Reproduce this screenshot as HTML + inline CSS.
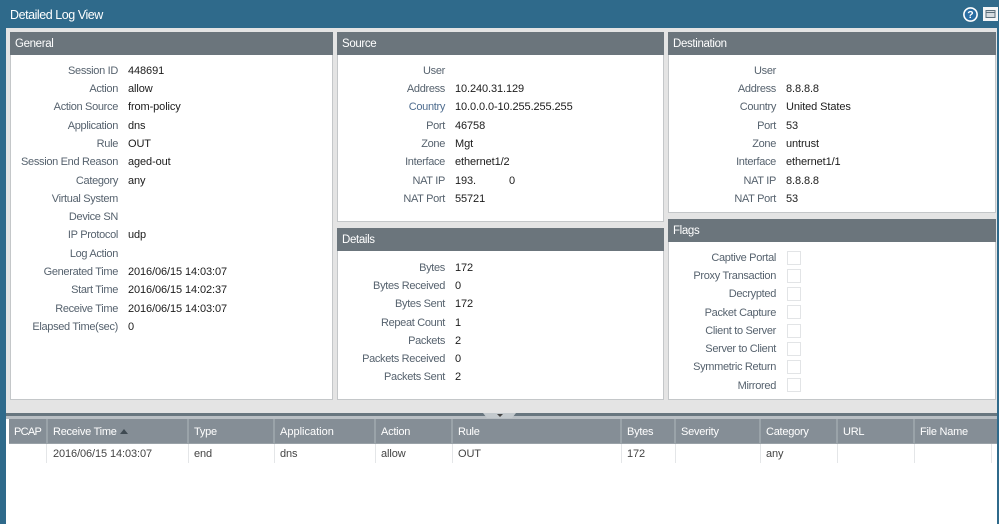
<!DOCTYPE html>
<html><head><meta charset="utf-8">
<style>
html,body{margin:0;padding:0}
body{width:999px;height:524px;position:relative;overflow:hidden;background:#2f6a8b;font-family:"Liberation Sans",sans-serif;font-size:11px;color:#1a1a1a}
div{position:absolute;box-sizing:border-box}
.p{background:#fff;border:1px solid #c4c7c9;border-top:0}
.h{background:#6b757c;color:#fff;height:23px;line-height:25px;padding-left:5px;font-size:11.5px;letter-spacing:-.35px;left:-1px;right:-1px;top:0}
.l,.v{height:14px;line-height:14px;white-space:nowrap;margin-top:1px}
.l{text-align:right;color:#56626e;width:130px;letter-spacing:-.32px}
.v{color:#1c1c1c;letter-spacing:-.1px}
.b{color:#4f6d8f}
.c{left:787px;width:14px;height:14px;border:1px solid #e2e4e6;background:#fff}
.th{top:419px;height:25px;line-height:27px;background:#858e96;color:#fff;border-right:2px solid #9aa3a9;padding-left:5px;white-space:nowrap;border-bottom:1px solid #9aa2a8;letter-spacing:-.25px}
.td{top:444px;height:19px;line-height:20px;background:#fff;color:#444;border-right:1px solid #e4e6e8;padding-left:5px;white-space:nowrap;letter-spacing:-.1px}
</style></head><body>
<div style="left:10px;top:7px;color:#fff;font-size:12.5px;line-height:16px;letter-spacing:-.45px">Detailed Log View</div>
<svg style="position:absolute;left:963px;top:7px" width="15" height="15" viewBox="0 0 15 15"><circle cx="7.5" cy="7.5" r="6.6" fill="#2b6ea3" stroke="#fff" stroke-width="1.6"/><text x="7.5" y="11.2" text-anchor="middle" font-family="Liberation Sans" font-weight="bold" font-size="10.5" fill="#fff">?</text></svg>
<svg style="position:absolute;left:983px;top:7px" width="15" height="14" viewBox="0 0 15 14"><rect width="15" height="14" fill="#f4f6f7"/><rect x="3" y="3.5" width="9" height="7" fill="#d5dbdf" stroke="#5c707c"/><line x1="3" y1="5.5" x2="12" y2="5.5" stroke="#5c707c"/></svg>

<div style="left:6px;top:28px;width:991px;height:496px;background:#e4e4e4"></div>

<div class="p" style="left:10px;top:32px;width:323px;height:368px"><div class="h">General</div></div>
<div class="p" style="left:337px;top:32px;width:327px;height:190px"><div class="h">Source</div></div>
<div class="p" style="left:337px;top:228px;width:327px;height:172px"><div class="h">Details</div></div>
<div class="p" style="left:668px;top:32px;width:328px;height:181px"><div class="h">Destination</div></div>
<div class="p" style="left:668px;top:219px;width:328px;height:181px"><div class="h">Flags</div></div>

<!-- General -->
<div class="l" style="left:-12px;top:63px">Session ID</div><div class="v" style="left:128px;top:63px">448691</div>
<div class="l" style="left:-12px;top:81px">Action</div><div class="v" style="left:128px;top:81px">allow</div>
<div class="l" style="left:-12px;top:99px">Action Source</div><div class="v" style="left:128px;top:99px">from-policy</div>
<div class="l" style="left:-12px;top:118px">Application</div><div class="v" style="left:128px;top:118px">dns</div>
<div class="l" style="left:-12px;top:136px">Rule</div><div class="v" style="left:128px;top:136px">OUT</div>
<div class="l" style="left:-12px;top:154px">Session End Reason</div><div class="v" style="left:128px;top:154px">aged-out</div>
<div class="l" style="left:-12px;top:173px">Category</div><div class="v" style="left:128px;top:173px">any</div>
<div class="l" style="left:-12px;top:191px">Virtual System</div>
<div class="l" style="left:-12px;top:209px">Device SN</div>
<div class="l" style="left:-12px;top:227px">IP Protocol</div><div class="v" style="left:128px;top:227px">udp</div>
<div class="l" style="left:-12px;top:246px">Log Action</div>
<div class="l" style="left:-12px;top:264px">Generated Time</div><div class="v" style="left:128px;top:264px">2016/06/15 14:03:07</div>
<div class="l" style="left:-12px;top:282px">Start Time</div><div class="v" style="left:128px;top:282px">2016/06/15 14:02:37</div>
<div class="l" style="left:-12px;top:301px">Receive Time</div><div class="v" style="left:128px;top:301px">2016/06/15 14:03:07</div>
<div class="l" style="left:-12px;top:319px">Elapsed Time(sec)</div><div class="v" style="left:128px;top:319px">0</div>

<!-- Source -->
<div class="l" style="left:315px;top:63px">User</div>
<div class="l" style="left:315px;top:81px">Address</div><div class="v" style="left:455px;top:81px">10.240.31.129</div>
<div class="l b" style="left:315px;top:99px">Country</div><div class="v" style="left:455px;top:99px">10.0.0.0-10.255.255.255</div>
<div class="l" style="left:315px;top:118px">Port</div><div class="v" style="left:455px;top:118px">46758</div>
<div class="l" style="left:315px;top:136px">Zone</div><div class="v" style="left:455px;top:136px">Mgt</div>
<div class="l" style="left:315px;top:154px">Interface</div><div class="v" style="left:455px;top:154px">ethernet1/2</div>
<div class="l" style="left:315px;top:173px">NAT IP</div><div class="v" style="left:455px;top:173px">193.</div><div class="v" style="left:509px;top:173px">0</div>
<div class="l" style="left:315px;top:191px">NAT Port</div><div class="v" style="left:455px;top:191px">55721</div>

<!-- Details -->
<div class="l" style="left:315px;top:260px">Bytes</div><div class="v" style="left:455px;top:260px">172</div>
<div class="l" style="left:315px;top:278px">Bytes Received</div><div class="v" style="left:455px;top:278px">0</div>
<div class="l" style="left:315px;top:296px">Bytes Sent</div><div class="v" style="left:455px;top:296px">172</div>
<div class="l" style="left:315px;top:315px">Repeat Count</div><div class="v" style="left:455px;top:315px">1</div>
<div class="l" style="left:315px;top:333px">Packets</div><div class="v" style="left:455px;top:333px">2</div>
<div class="l" style="left:315px;top:351px">Packets Received</div><div class="v" style="left:455px;top:351px">0</div>
<div class="l" style="left:315px;top:369px">Packets Sent</div><div class="v" style="left:455px;top:369px">2</div>

<!-- Destination -->
<div class="l" style="left:646px;top:63px">User</div>
<div class="l" style="left:646px;top:81px">Address</div><div class="v" style="left:786px;top:81px">8.8.8.8</div>
<div class="l" style="left:646px;top:99px">Country</div><div class="v" style="left:786px;top:99px">United States</div>
<div class="l" style="left:646px;top:118px">Port</div><div class="v" style="left:786px;top:118px">53</div>
<div class="l" style="left:646px;top:136px">Zone</div><div class="v" style="left:786px;top:136px">untrust</div>
<div class="l" style="left:646px;top:154px">Interface</div><div class="v" style="left:786px;top:154px">ethernet1/1</div>
<div class="l" style="left:646px;top:173px">NAT IP</div><div class="v" style="left:786px;top:173px">8.8.8.8</div>
<div class="l" style="left:646px;top:191px">NAT Port</div><div class="v" style="left:786px;top:191px">53</div>

<!-- Flags -->
<div class="l" style="left:646px;top:250px">Captive Portal</div><div class="c" style="top:251px"></div>
<div class="l" style="left:646px;top:268px">Proxy Transaction</div><div class="c" style="top:269px"></div>
<div class="l" style="left:646px;top:286px">Decrypted</div><div class="c" style="top:287px"></div>
<div class="l" style="left:646px;top:305px">Packet Capture</div><div class="c" style="top:305px"></div>
<div class="l" style="left:646px;top:323px">Client to Server</div><div class="c" style="top:324px"></div>
<div class="l" style="left:646px;top:341px">Server to Client</div><div class="c" style="top:342px"></div>
<div class="l" style="left:646px;top:359px">Symmetric Return</div><div class="c" style="top:360px"></div>
<div class="l" style="left:646px;top:378px">Mirrored</div><div class="c" style="top:378px"></div>

<!-- Divider and table -->
<div style="left:6px;top:413px;width:991px;height:111px;background:#fff"></div>
<div style="left:6px;top:413px;width:993px;height:3px;background:#68767f"></div>
<div style="left:6px;top:416px;width:993px;height:3px;background:#b9bfc4"></div>
<div style="left:483px;top:413px;width:33px;height:5px;background:#c3c9cd;clip-path:polygon(0 0,100% 0,88% 100%,12% 100%)"></div>
<div style="left:497px;top:414px;width:0;height:0;border:3px solid transparent;border-top:3px solid #444;border-bottom:0"></div>
<div style="left:997px;top:413px;width:2px;height:111px;background:#2f6a8b"></div>

<div class="th" style="left:9px;width:39px;letter-spacing:-.7px">PCAP</div>
<div class="th" style="left:48px;width:141px">Receive Time <span style="display:inline-block;width:0;height:0;border:4.5px solid transparent;border-bottom:5px solid #3f4a52;border-top:0;vertical-align:1px;margin-left:1px"></span></div>
<div class="th" style="left:189px;width:86px">Type</div>
<div class="th" style="left:275px;width:101px;letter-spacing:0">Application</div>
<div class="th" style="left:376px;width:77px">Action</div>
<div class="th" style="left:453px;width:169px">Rule</div>
<div class="th" style="left:622px;width:54px">Bytes</div>
<div class="th" style="left:676px;width:85px">Severity</div>
<div class="th" style="left:761px;width:77px">Category</div>
<div class="th" style="left:838px;width:77px">URL</div>
<div class="th" style="left:915px;width:82px;border-right:0">File Name</div>

<div class="td" style="left:9px;width:38px"></div>
<div class="td" style="left:48px;width:141px">2016/06/15 14:03:07</div>
<div class="td" style="left:189px;width:86px">end</div>
<div class="td" style="left:275px;width:101px">dns</div>
<div class="td" style="left:376px;width:77px">allow</div>
<div class="td" style="left:453px;width:169px">OUT</div>
<div class="td" style="left:622px;width:54px">172</div>
<div class="td" style="left:676px;width:85px"></div>
<div class="td" style="left:761px;width:77px">any</div>
<div class="td" style="left:838px;width:77px"></div>
<div class="td" style="left:915px;width:77px"></div>
</body></html>
